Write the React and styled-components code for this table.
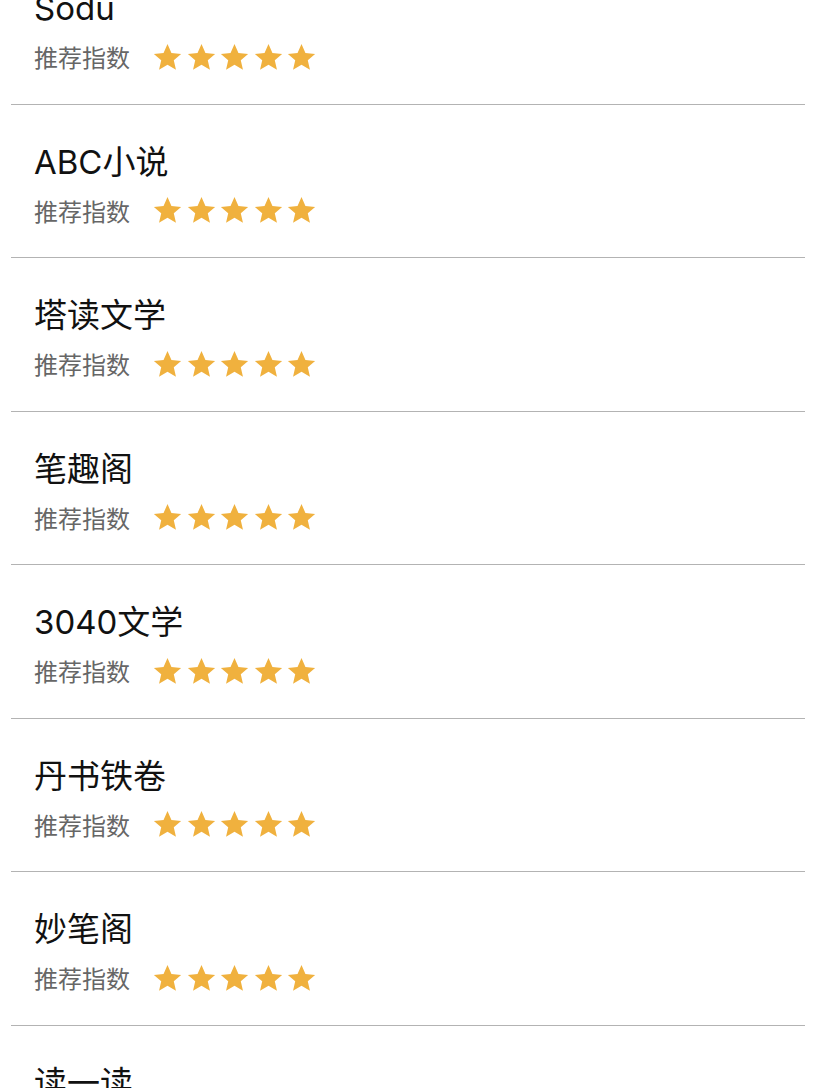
import React from "react";
import styled, { createGlobalStyle } from "styled-components";

const GlobalStyle = createGlobalStyle`
  html, body {
    margin: 0;
    padding: 0;
    background: #ffffff;
    overflow: hidden;
  }
  body {
    font-family: Inter, "Noto Sans CJK SC", sans-serif;
  }
`;

const List = styled.div`
  margin-top: -49px;
  display: flex;
  flex-direction: column;
`;

const Row = styled.div`
  box-sizing: border-box;
  height: 153.5px;
  margin: 0 11px;
  padding: 36px 23px 0;
  border-bottom: 1.5px solid #b3b3b3;
  display: flex;
  flex-direction: column;
  gap: 12px;
`;

const Title = styled.div`
  font-size: 33px;
  line-height: 42px;
  color: #111111;
  white-space: nowrap;
`;

const RatingLine = styled.div`
  display: flex;
  align-items: center;
  height: 32px;
  gap: 22px;
`;

const Label = styled.span`
  font-family: "Noto Sans CJK SC", sans-serif;
  font-size: 24px;
  line-height: 32px;
  color: #666666;
`;

const Stars = styled.div`
  display: flex;
  gap: 2.5px;
`;

const StarSvg = styled.svg`
  width: 31px;
  height: 31px;
  display: block;
`;

function Star() {
  return (
    <StarSvg viewBox="0 0 24 24">
      <path
        d="M12 1.6l3.05 6.9 7.5.7-5.68 5 1.68 7.36L12 17.7l-6.55 3.86 1.68-7.36-5.68-5 7.5-.7z"
        fill="#f0b13e"
      />
    </StarSvg>
  );
}

const apps = ["Sodu", "ABC小说", "塔读文学", "笔趣阁", "3040文学", "丹书铁卷", "妙笔阁", "读一读"];

export default function App() {
  return (
    <>
      <GlobalStyle />
      <List>
        {apps.map(name => (
          <Row key={name}>
            <Title>{name}</Title>
            <RatingLine>
              <Label>推荐指数</Label>
              <Stars>
                {[0, 1, 2, 3, 4].map(i => (
                  <Star key={i} />
                ))}
              </Stars>
            </RatingLine>
          </Row>
        ))}
      </List>
    </>
  );
}
